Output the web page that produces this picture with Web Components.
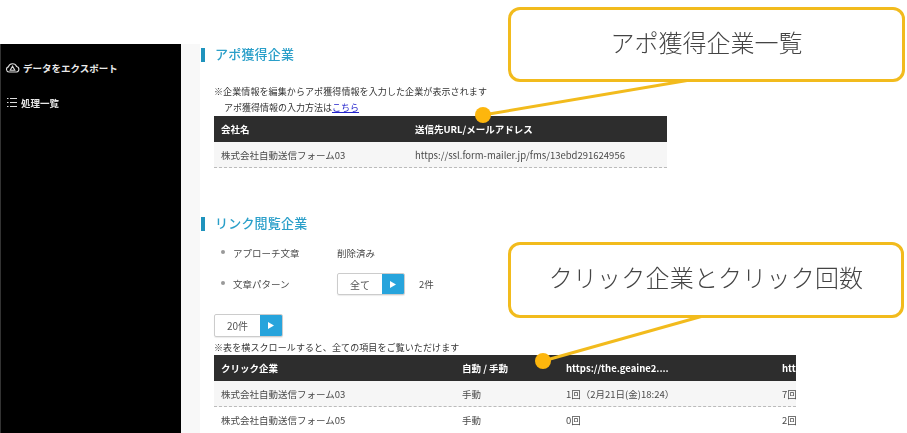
<!DOCTYPE html>
<html lang="ja">
<head>
<meta charset="utf-8">
<title>アポ獲得企業一覧</title>
<style>
  html, body { margin: 0; height: 433px; overflow: hidden; background: #fff; }
  body { font-family: "Noto Sans CJK JP", "Noto Sans", sans-serif; color: #444; }
</style>
</head>
<body>
<template id="tpl-shell">
  <style>
    :host { display: grid; grid-template-columns: 181px 19px 1fr; height: 389px; margin-top: 44px; filter: blur(.35px); }
    .gutter { background: #f8f8f8; }
    main { padding: 3px 0 0 1px; min-width: 0; overflow: hidden; }
  </style>
  <slot name="side"></slot>
  <div class="gutter"></div>
  <main><slot></slot></main>
</template>

<template id="tpl-sidebar">
  <style>
    :host { display: flex; flex-direction: column; gap: 18px; background: #000; padding-top: 15px; box-sizing: border-box; border-left: 1px solid #333; }
  </style>
  <slot></slot>
</template>

<template id="tpl-nav">
  <style>
    :host { display: flex; align-items: center; gap: 3px; height: 17px; padding-left: 4px; color: #e8e8e8; font-size: 9.5px; font-weight: 700; }
  </style>
  <slot name="icon"></slot><slot></slot>
</template>

<template id="tpl-heading">
  <style>
    :host { display: flex; align-items: center; gap: 10px; height: 16px; color: #2a9fc9; font-size: 13px; font-weight: 500; letter-spacing: .2px; }
    i { width: 4px; height: 14px; background: #1f93bd; }
    span { margin-top: -3px; }
  </style>
  <i></i><span><slot></slot></span>
</template>

<template id="tpl-table">
  <style>
    :host { display: block; margin-left: 13px; overflow: hidden; font-size: 9.5px; }
    .head, ::slotted(table-row) { display: grid; grid-template-columns: var(--cols); }
    .head { height: 26px; align-items: center; background: #2d2d2d; color: #fff; font-weight: 700; }
  </style>
  <div class="head"><slot name="head"></slot></div>
  <slot></slot>
</template>

<template id="tpl-row">
  <style>
    :host { height: 26px; box-sizing: border-box; align-items: center; color: #4a4a4a; border-bottom: 1px dashed #bbb; white-space: nowrap; }
    :host(.tint) { background: #f6f6f6; }
    :host(.last) { border-bottom: 0; }
    :host(.head-row) { height: 26px; color: #fff; border: 0; width: 100%; display: grid; grid-template-columns: var(--cols); grid-column: 1 / -1; }
  </style>
  <slot></slot>
</template>

<template id="tpl-select">
  <style>
    :host { display: inline-flex; box-sizing: border-box; height: var(--h, 23px); width: var(--w, 68px); border: 1px solid #ccc; border-radius: 2px; background: #fff; font-size: 10px; color: #555; box-shadow: 0 1px 1px rgba(0,0,0,.08); overflow: hidden; }
    span { flex: 1; display: flex; align-items: center; justify-content: center; }
    b { width: 22px; display: flex; align-items: center; justify-content: center; background: #27a4dc; }
    svg { width: 6px; height: 7px; fill: #fff; }
  </style>
  <span><slot></slot></span>
  <b><svg viewBox="0 0 6 7"><path d="M0 0l6 3.5L0 7z"/></svg></b>
</template>

<template id="tpl-field">
  <style>
    :host { display: grid; grid-template-columns: 116px auto; align-items: center; margin-left: 20px; font-size: 9.5px; color: #4a4a4a; }
    .label { display: flex; align-items: center; gap: 8px; }
    .label i { width: 4px; height: 4px; border-radius: 50%; background: #999; margin-top: -3px; }
    .value { display: flex; align-items: center; gap: 14px; }
  </style>
  <div class="label"><i></i><slot name="label"></slot></div>
  <div class="value"><slot></slot></div>
</template>

<template id="tpl-note">
  <style>
    :host { display: block; margin-left: 13px; font-size: 9px; letter-spacing: .1px; line-height: 15px; color: #333; white-space: nowrap; }
    ::slotted(a) { color: #2222cc; text-decoration: underline; }
  </style>
  <slot></slot>
</template>

<template id="tpl-callout">
  <style>
    :host { position: absolute; box-sizing: border-box; display: flex; align-items: center; justify-content: center; padding-bottom: 7px; background: #fff; border: 3px solid #f2bb1d; border-radius: 12px; color: #444; font-size: 24px; font-weight: 300; filter: blur(.3px); }
  </style>
  <slot></slot>
</template>

<app-shell>
  <app-sidebar slot="side">
    <nav-item>
      <svg slot="icon" viewBox="0 0 15 13" width="15" height="13" fill="none" stroke="#ddd" stroke-width="1.1" style="display:block"><path d="M4 11a2.6 2.6 0 0 1-.6-5.1 4.3 4.3 0 0 1 8.2-.4 2.8 2.8 0 0 1 0 5.5z"/><path d="M7.5 5.2L5.2 9.2h4.6z"/></svg>
      データをエクスポート
    </nav-item>
    <nav-item>
      <svg slot="icon" viewBox="0 0 15 13" width="15" height="13" fill="none" stroke="#ddd" stroke-width="1.1" style="display:block;margin-right:-2px"><path d="M2 2.5h1.5M2 6.5h1.5M2 10.5h1.5M5 2.5h7M5 6.5h7M5 10.5h7"/></svg>
      処理一覧
    </nav-item>
  </app-sidebar>

  <section-heading>アポ獲得企業</section-heading>
  <info-note style="margin-top:21px">※企業情報を編集からアポ獲得情報を入力した企業が表示されます</info-note>
  <info-note style="margin:1px 0 0 23px;letter-spacing:0">アポ獲得情報の入力方法は<a href="#">こちら</a></info-note>
  <data-table style="--cols:201px 1fr;width:453px;margin-top:1px">
    <table-row class="head-row" slot="head"><span style="padding-left:7px">会社名</span><span>送信先URL/メールアドレス</span></table-row>
    <table-row class="tint"><span style="padding-left:7px">株式会社自動送信フォーム03</span><span>https://ssl.form-mailer.jp/fms/13ebd291624956</span></table-row>
  </data-table>

  <section-heading style="margin-top:48px">リンク閲覧企業</section-heading>
  <form-field style="height:30px;margin-top:6px"><span slot="label">アプローチ文章</span><span>削除済み</span></form-field>
  <form-field style="height:32px"><span slot="label">文章パターン</span><select-box style="--h:22px">全て</select-box><span>2件</span></form-field>
  <select-box style="--w:69px;margin:14px 0 0 13px;display:flex">20件</select-box>
  <info-note style="margin-top:3px">※表を横スクロールすると、全ての項目をご覧いただけます</info-note>
  <data-table style="--cols:248px 104px 216px 14px;width:582px;margin-top:0">
    <table-row class="head-row" slot="head"><span style="padding-left:7px">クリック企業</span><span>自動 / 手動</span><span>https://the.geaine2....</span><span>htt</span></table-row>
    <table-row class="tint"><span style="padding-left:7px">株式会社自動送信フォーム03</span><span>手動</span><span>1回（2月21日(金)18:24）</span><span>7回</span></table-row>
    <table-row class="last"><span style="padding-left:7px">株式会社自動送信フォーム05</span><span>手動</span><span>0回</span><span>2回</span></table-row>
  </data-table>
</app-shell>

<svg style="position:absolute;left:0;top:0;pointer-events:none" width="907" height="433" viewBox="0 0 907 433">
  <path d="M690 80L483 115" stroke="#f2bb1d" stroke-width="3" fill="none"/>
  <circle cx="483" cy="115" r="8" fill="#fdb60d"/>
  <path d="M703 316L543 361" stroke="#f2bb1d" stroke-width="3" fill="none"/>
  <circle cx="543" cy="361" r="8" fill="#fdb60d"/>
</svg>
<call-out style="left:508px;top:7px;width:397px;height:75px">アポ獲得企業一覧</call-out>
<call-out style="left:508px;top:242px;width:396px;height:76px;letter-spacing:.2px">クリック企業とクリック回数</call-out>

<script>
  function define(tag, tplId) {
    customElements.define(tag, class extends HTMLElement {
      constructor() {
        super();
        this.attachShadow({ mode: 'open' });
        this.shadowRoot.appendChild(document.getElementById(tplId).content.cloneNode(true));
      }
    });
  }
  define('app-shell', 'tpl-shell');
  define('app-sidebar', 'tpl-sidebar');
  define('nav-item', 'tpl-nav');
  define('section-heading', 'tpl-heading');
  define('data-table', 'tpl-table');
  define('table-row', 'tpl-row');
  define('select-box', 'tpl-select');
  define('form-field', 'tpl-field');
  define('info-note', 'tpl-note');
  define('call-out', 'tpl-callout');
</script>
</body>
</html>
